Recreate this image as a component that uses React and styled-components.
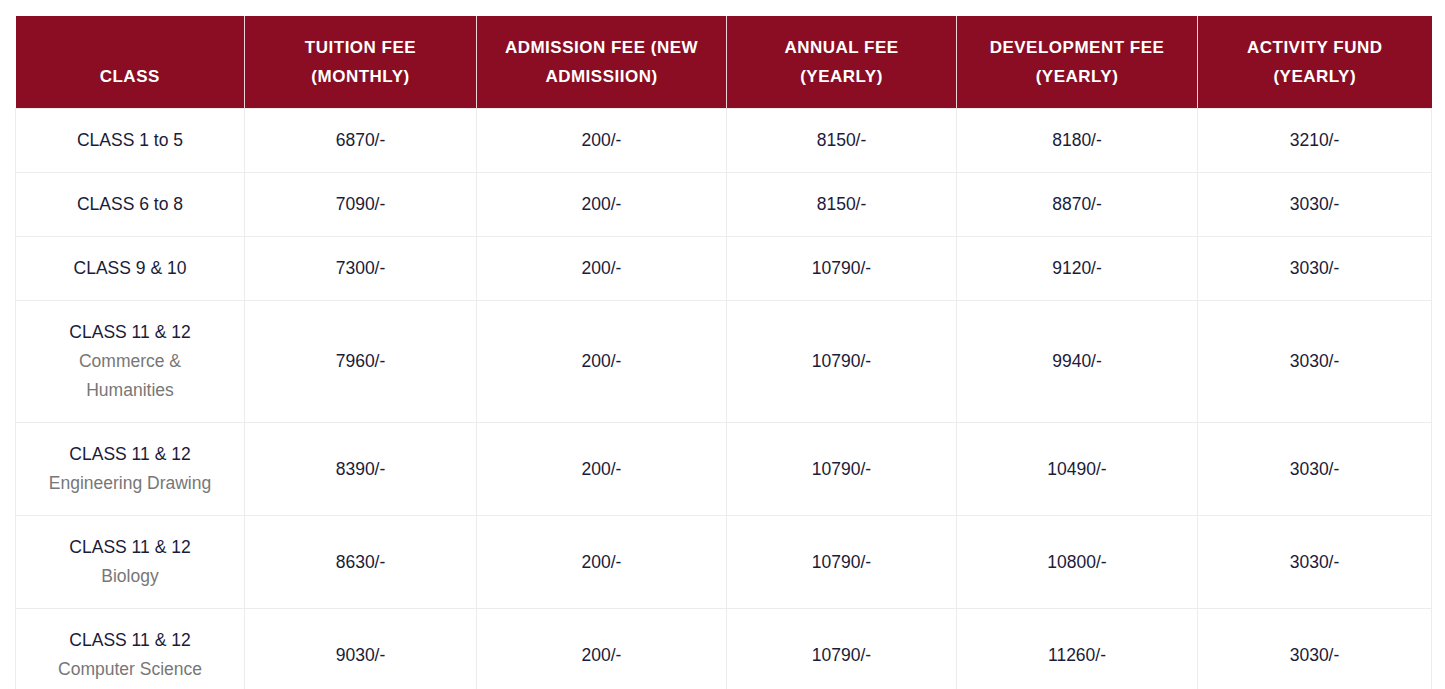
import React from "react"
import styled, { createGlobalStyle } from "styled-components"

const GlobalStyle = createGlobalStyle`
    body {
        margin: 0;
        background: #fff;
        font-family: "Liberation Sans", Arial, sans-serif;
    }
`

const Wrapper = styled.div`
    padding: 16px 14px 16px 15px;
`

const FeeTable = styled.table`
    width: 1416px;
    border-collapse: collapse;
    table-layout: fixed;
`

const HeadCell = styled.th`
    background: #8a0d24;
    color: #fff;
    font-size: 17px;
    font-weight: bold;
    letter-spacing: 0.5px;
    line-height: 29px;
    padding: 17px 8px;
    text-align: center;
    vertical-align: bottom;
    border-left: 1px solid #e9d3d7;
    &:first-child {
        border-left: none;
    }
`

const Cell = styled.td`
    color: #1b1b3a;
    font-size: 17.5px;
    line-height: 29px;
    padding: 17px 20px;
    text-align: center;
    vertical-align: middle;
    border: 1px solid #ececec;
`

const Sub = styled.span`
    display: block;
    color: #777;
`

const widths = [229, 232, 250, 230, 241, 234]

const headers = [
    ["CLASS"],
    ["TUITION FEE", "(MONTHLY)"],
    ["ADMISSION FEE (NEW", "ADMISSIION)"],
    ["ANNUAL FEE", "(YEARLY)"],
    ["DEVELOPMENT FEE", "(YEARLY)"],
    ["ACTIVITY FUND", "(YEARLY)"],
]

const rows = [
    { name: "CLASS 1 to 5", fees: ["6870/-", "200/-", "8150/-", "8180/-", "3210/-"] },
    { name: "CLASS 6 to 8", fees: ["7090/-", "200/-", "8150/-", "8870/-", "3030/-"] },
    { name: "CLASS 9 & 10", fees: ["7300/-", "200/-", "10790/-", "9120/-", "3030/-"] },
    { name: "CLASS 11 & 12", sub: "Commerce & Humanities", fees: ["7960/-", "200/-", "10790/-", "9940/-", "3030/-"] },
    { name: "CLASS 11 & 12", sub: "Engineering Drawing", fees: ["8390/-", "200/-", "10790/-", "10490/-", "3030/-"] },
    { name: "CLASS 11 & 12", sub: "Biology", fees: ["8630/-", "200/-", "10790/-", "10800/-", "3030/-"] },
    { name: "CLASS 11 & 12", sub: "Computer Science", fees: ["9030/-", "200/-", "10790/-", "11260/-", "3030/-"] },
]

const App = () => {
    return (
        <Wrapper>
            <GlobalStyle />
            <FeeTable>
                <colgroup>
                    {widths.map((w, i) => <col key={i} style={{ width: w }} />)}
                </colgroup>
                <thead>
                    <tr>
                        {headers.map((lines, i) => (
                            <HeadCell key={i}>
                                {lines.map((l, j) => <div key={j}>{l}</div>)}
                            </HeadCell>
                        ))}
                    </tr>
                </thead>
                <tbody>
                    {rows.map((row, index) => (
                        <tr key={"row" + index}>
                            <Cell>
                                {row.name}
                                {row.sub && <Sub>{row.sub}</Sub>}
                            </Cell>
                            {row.fees.map((fee, j) => <Cell key={j}>{fee}</Cell>)}
                        </tr>
                    ))}
                </tbody>
            </FeeTable>
        </Wrapper>
    )
}

export default App
